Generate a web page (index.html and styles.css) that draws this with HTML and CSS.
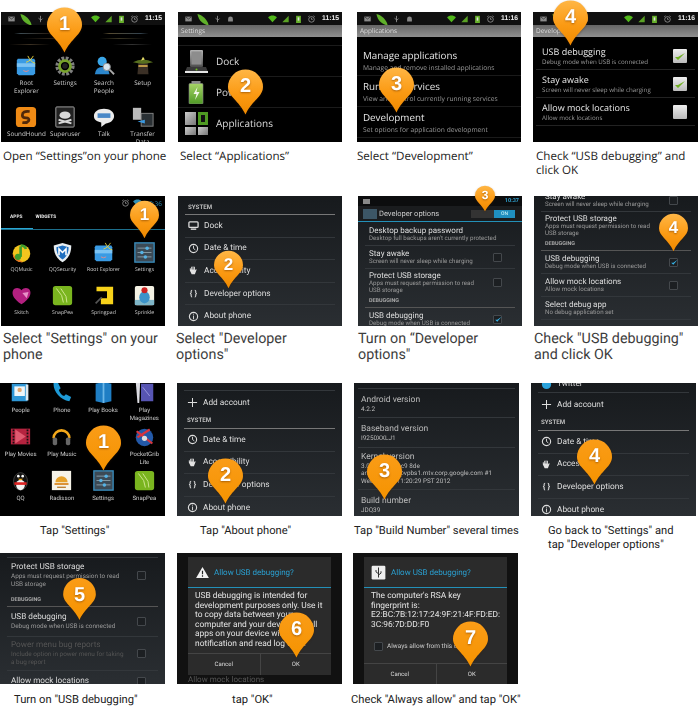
FILE: index.html
```html
<!DOCTYPE html>
<html lang="en">
<head>
<meta charset="utf-8">
<title>Enable USB debugging</title>
<link rel="stylesheet" href="styles.css">
</head>
<body>
<svg class="defs" xmlns="http://www.w3.org/2000/svg">
  <defs>
    <linearGradient id="pinA" x1="0" y1="0" x2="0" y2="1"><stop offset="0" stop-color="#ffb645"/><stop offset=".55" stop-color="#fb9a13"/><stop offset="1" stop-color="#f08a00"/></linearGradient>
    <linearGradient id="pinB" x1="0" y1="0" x2="0" y2="1"><stop offset="0" stop-color="#fa9c17"/><stop offset="1" stop-color="#f59300"/></linearGradient>
    <linearGradient id="batG" x1="0" y1="0" x2="0" y2="1"><stop offset="0" stop-color="#a7d468"/><stop offset="1" stop-color="#4f9a25"/></linearGradient>
    <linearGradient id="devG" x1="0" y1="0" x2="0" y2="1"><stop offset="0" stop-color="#b5b5b5"/><stop offset="1" stop-color="#4d4d4d"/></linearGradient>
  </defs>
  <symbol id="pin" viewBox="0 0 35 45"><path fill="url(#pinA)" d="M17.500 0A17.500 17.500 0 0 1 35 17.500C35 27 24 31 17.500 45 11 31 0 27 0 17.500A17.500 17.500 0 0 1 17.500 0Z"/></symbol>
  <symbol id="pinflat" viewBox="0 0 35 45"><path fill="url(#pinB)" d="M17.500 0A17.500 17.500 0 0 1 35 17.500C35 27 24 31 17.500 45 11 31 0 27 0 17.500A17.500 17.500 0 0 1 17.500 0Z"/></symbol>

  <symbol id="mail" viewBox="0 0 10 10"><rect x="1" y="2" width="8" height="6" fill="#8a8a8a"/><path d="M1 2l4 3 4-3" fill="none" stroke="#333"/></symbol>
  <symbol id="leaf" viewBox="0 0 14 14"><path d="M1 1c5 1 11 6 12 12C8 13 2 8 1 1Z" fill="#5fb02a"/></symbol>
  <symbol id="usb" viewBox="0 0 10 10"><path d="M5 1v8M5 6L2.500 4M5 7l2.500-2.500" stroke="#999" fill="none"/></symbol>
  <symbol id="droid" viewBox="0 0 10 10"><path d="M2 5a3 3 0 0 1 6 0v3H2Z" fill="#888"/></symbol>
  <symbol id="wifi" viewBox="0 0 11 10"><path d="M0 3c3-3 8-3 11 0L5.500 9Z" fill="#52b81c"/></symbol>
  <symbol id="wifiblue" viewBox="0 0 11 10"><path d="M0 3c3-3 8-3 11 0L5.500 9Z" fill="#2f8fb5"/></symbol>
  <symbol id="sig" viewBox="0 0 10 10"><path d="M1 9L9 1v8Z" fill="#5aa224"/></symbol>
  <symbol id="bat" viewBox="0 0 8 10"><rect x="1" y="1" width="6" height="9" fill="#67b02b"/><rect x="3" y="3" width="2" height="4" fill="#ddd"/></symbol>
  <symbol id="alarm" viewBox="0 0 10 10"><circle cx="5" cy="5.500" r="3.500" fill="none" stroke="#999"/><path d="M5 3.500v2h1.500M1 2l1.500-1M9 2L7.500 1" stroke="#999" fill="none"/></symbol>

  <symbol id="t-dock" viewBox="0 0 23 23"><rect x="5" y="0" width="13" height="17" rx="1" fill="url(#devG)"/><rect x="6.500" y="1.500" width="10" height="13" fill="#8d8d8d"/><path d="M0 22l2-5h19l2 5Z" fill="#3a3a3a"/><rect x="0" y="21" width="23" height="2" fill="#e4e4e4"/><circle cx="11.500" cy="19.500" r="1" fill="#6ec01c"/></symbol>
  <symbol id="t-power" viewBox="0 0 23 23"><rect x="6.500" y="0" width="9" height="3" fill="#8a8a8a"/><rect x="4" y="2.500" width="14" height="20.500" rx="1" fill="url(#batG)" stroke="#888" stroke-width=".6"/><path d="M12.500 6l-4 7h3l-1.500 6 4.500-8h-3Z" fill="#f2f7ea"/></symbol>

  <symbol id="clock" viewBox="0 0 12 12"><circle cx="6" cy="6" r="4.500" fill="none" stroke="#ddd" stroke-width="1.200"/><path d="M6 3v3l2 1.500" fill="none" stroke="#ddd"/></symbol>
  <symbol id="hand" viewBox="0 0 12 12"><path d="M2 6V3.500h1V5h.5V2h1v3H5V1.500h1V5h.5V2h1v4l1-1.500 1 .5-2 5H4Z" fill="#e2e2e2"/></symbol>
  <symbol id="info" viewBox="0 0 12 12"><circle cx="6" cy="6" r="4.500" fill="none" stroke="#ddd" stroke-width="1.200"/><path d="M6 5v4M6 3v1" stroke="#ddd"/></symbol>
  <symbol id="dock" viewBox="0 0 12 12"><rect x="1" y="2" width="10" height="6" rx="1" fill="none" stroke="#ddd" stroke-width="1.400"/><path d="M3 10h6" stroke="#ddd" stroke-width="1.500"/></symbol>
  <symbol id="plus" viewBox="0 0 12 12"><path d="M6 1v10M1 6h10" stroke="#ddd" stroke-width="1.100"/></symbol>
  <symbol id="check" viewBox="0 0 14 14"><path d="M2 8l3 3 7-7-7 4Z" fill="#6fb020"/></symbol>
  <symbol id="bluecheck" viewBox="0 0 14 14"><path d="M3 8l3 3 6-7-6 4Z" fill="#36b3e8"/></symbol>
  <symbol id="warn" viewBox="0 0 14 12"><path d="M7 0l7 12H0Z" fill="#f2f2f2"/><path d="M7 4v4M7 9v1.500" stroke="#222" stroke-width="1.300"/></symbol>

  <symbol id="a-root" viewBox="0 0 24 24"><path d="M3 4h18l1 2v14l-2 2H4l-2-2V6Z" fill="#3a9be4"/><rect x="2" y="9" width="20" height="4" fill="#7cc3f3"/><path d="M14 1c2 4 4 7 8 8M20 1c-2 3-4 6-8 7" stroke="#f0d63a" fill="none"/><path d="M9 17q3 2 6 0" stroke="#e88" fill="none"/></symbol>
  <symbol id="a-gear" viewBox="0 0 24 24"><circle cx="12" cy="12" r="8.500" fill="none" stroke="#7f7f7f" stroke-width="4" stroke-dasharray="3 1.500"/><circle cx="12" cy="12" r="6" fill="none" stroke="#78a32c" stroke-width="3"/><circle cx="12" cy="12" r="3" fill="#222"/></symbol>
  <symbol id="a-search" viewBox="0 0 24 24"><circle cx="10" cy="7" r="5" fill="#39a6e8"/><path d="M2 21q1-8 8-8t8 8Z" fill="#2b86cc"/><circle cx="15" cy="13" r="4" fill="#d8e6ee" stroke="#888"/><path d="M18 16l5 5" stroke="#aaa" stroke-width="2"/></symbol>
  <symbol id="a-setup" viewBox="0 0 24 24"><path d="M7 7h10l1 14H6Z" fill="#3b3026"/><path d="M1 8q11-6 22 0-11 3-22 0Z" fill="#58701f"/><path d="M12 2l2 3-4 1Z" fill="#e9e06a"/><rect x="7" y="11" width="10" height="2" fill="#caa24a"/></symbol>
  <symbol id="a-sound" viewBox="0 0 24 24"><rect x="1" y="1" width="22" height="22" rx="4" fill="#ef8a15"/><path d="M16 6q-8-1-8 4 0 3 4 3t3 3q-2 3-7 2" fill="none" stroke="#50280a" stroke-width="3"/></symbol>
  <symbol id="a-su" viewBox="0 0 24 24"><rect x="2" y="1" width="20" height="22" rx="1" fill="#222" stroke="#aaa"/><ellipse cx="12" cy="10" rx="6" ry="4" fill="#d8d8d8"/><path d="M5 15l14 4M19 15L5 19" stroke="#d8d8d8" stroke-width="2"/></symbol>
  <symbol id="a-talk" viewBox="0 0 24 24"><path d="M12 3c6 0 11 3 11 8s-5 8-9 8l-5 4v-5C4 17 1 15 1 11c0-5 5-8 11-8Z" fill="#ececec"/><rect x="5" y="8" width="14" height="5" fill="#4a88c7"/></symbol>
  <symbol id="a-trans" viewBox="0 0 24 24"><rect x="1" y="2" width="9" height="13" fill="#bbb"/><rect x="10" y="8" width="13" height="14" fill="#2a3034" stroke="#888"/><path d="M6 17l8 2v-4Z" fill="#3a9be4"/></symbol>
  <symbol id="a-qqm" viewBox="0 0 24 24"><circle cx="12" cy="13" r="10" fill="#f2c51e"/><path d="M2 13a10 10 0 0 0 12 10c-6-3-10-6-12-10Z" fill="#e47421"/><path d="M11 5v12" stroke="#3f9d2c" stroke-width="3"/><circle cx="8" cy="17" r="3.500" fill="#3f9d2c"/><path d="M11 4q5 0 6 4" stroke="#3f9d2c" stroke-width="3" fill="none"/></symbol>
  <symbol id="a-qqs" viewBox="0 0 24 24"><path d="M12 1l10 3c0 9-3 15-10 19C5 19 2 13 2 4Z" fill="#e8eef2"/><path d="M12 4l7 2c0 6-2 11-7 14C7 17 5 12 5 6Z" fill="#1f6fc0"/><path d="M8 15V8l4 4 4-4v7" fill="none" stroke="#fff" stroke-width="1.800"/></symbol>
  <symbol id="a-set" viewBox="0 0 24 24"><rect x="1" y="1" width="22" height="22" fill="#3c4a55" stroke="#3a8fbf" stroke-width="1.500"/><path d="M4 7h16M4 12h16M4 17h16" stroke="#8fa3ae"/><circle cx="15" cy="7" r="2" fill="#55b3e5"/><circle cx="9" cy="12" r="2" fill="#55b3e5"/><circle cx="13" cy="17" r="2" fill="#55b3e5"/></symbol>
  <symbol id="a-skitch" viewBox="0 0 24 24"><path d="M12 22C3 16 1 11 2 7c1-4 7-5 10-1 3-4 9-3 10 1 1 4-1 9-10 15Z" fill="#b32080"/><path d="M13 9l7-1-2 7Z" fill="#e892c7"/></symbol>
  <symbol id="a-snap" viewBox="0 0 24 24"><rect x="1" y="1" width="22" height="22" rx="3" fill="#7ab51f"/><path d="M5 4l6 8 2 8M10 4l6 9 1 7" stroke="#d8ea9c" fill="none"/></symbol>
  <symbol id="a-spring" viewBox="0 0 24 24"><path d="M4 2h19v20H9v-7h7V7H4Z" fill="#f7d21a"/><path d="M3 21l7-7" stroke="#555" stroke-width="2"/></symbol>
  <symbol id="a-sprink" viewBox="0 0 24 24"><rect x="1" y="1" width="22" height="22" rx="2" fill="#f4f2e4"/><path d="M1 17h22v6H1Z" fill="#7fb6c8"/><ellipse cx="12" cy="14" rx="6" ry="7" fill="#3c93c9"/><circle cx="12" cy="6" r="3.500" fill="#c22"/></symbol>
  <symbol id="a-people" viewBox="0 0 24 24"><rect x="2" y="2" width="18" height="20" fill="#2f97d6"/><rect x="18" y="3" width="3" height="18" fill="#dfe9ee"/><rect x="5" y="5" width="12" height="11" fill="#eef6f9"/><circle cx="11" cy="9" r="2.500" fill="#e4a66c"/></symbol>
  <symbol id="a-phone" viewBox="0 0 24 24"><path d="M3 1c-1 9 7 19 18 21l2-5-6-3-2 2c-3-1-5-4-6-7l2-2-3-6Z" fill="#1e9ad6"/></symbol>
  <symbol id="a-book" viewBox="0 0 24 24"><path d="M3 2l9-2 9 2v20l-9 2-9-2Z" fill="#1f7ec4"/><path d="M12 0v24" stroke="#6bb6e6" stroke-width="2"/></symbol>
  <symbol id="a-mag" viewBox="0 0 24 24"><rect x="8" y="2" width="14" height="20" fill="#5755b3"/><path d="M2 0h5l-1 24H4Z" fill="#dcdce2"/><path d="M10 6l8 10" stroke="#9b9be0"/></symbol>
  <symbol id="a-film" viewBox="0 0 24 24"><rect x="1" y="3" width="22" height="18" fill="#b5233f"/><path d="M4 4v16M20 4v16" stroke="#111" stroke-width="2" stroke-dasharray="2 1.500"/><path d="M6 4l12 8-12 8Z" fill="#e05a70"/></symbol>
  <symbol id="a-music" viewBox="0 0 24 24"><path d="M3 14a9 9 0 0 1 18 0" fill="none" stroke="#f3a81a" stroke-width="3"/><rect x="2" y="13" width="5" height="9" rx="2" fill="#666"/><rect x="17" y="13" width="5" height="9" rx="2" fill="#666"/></symbol>
  <symbol id="a-grib" viewBox="0 0 24 24"><circle cx="12" cy="13" r="10" fill="#2359a8"/><path d="M3 6l18 14M4 13l14-9" stroke="#d8343c" stroke-width="2.500"/><circle cx="12" cy="14" r="3" fill="#ddd"/></symbol>
  <symbol id="a-qq" viewBox="0 0 24 24"><ellipse cx="12" cy="13" rx="8" ry="10" fill="#111" stroke="#444"/><ellipse cx="12" cy="17" rx="5" ry="6" fill="#f3f3f3"/><path d="M5 14h14v3H5Z" fill="#d22"/><circle cx="9.500" cy="7" r="1.500" fill="#fff"/><circle cx="14.500" cy="7" r="1.500" fill="#fff"/><path d="M9 10h6l-3 2Z" fill="#f3b01e"/></symbol>
  <symbol id="a-rad" viewBox="0 0 24 24"><rect x="1" y="1" width="22" height="22" fill="#f6f3e8"/><path d="M5 14a7 7 0 0 1 14 0Z" fill="#e7a22b"/><rect x="4" y="15" width="16" height="2" fill="#d9861e"/><rect x="7" y="19" width="10" height="1.500" fill="#b77a2b"/></symbol>
  <symbol id="a-adb" viewBox="0 0 24 24"><rect x="1" y="1" width="22" height="22" rx="2" fill="#eee"/><path d="M12 4v16M12 14l-4-3v-3M12 16l4-3v-3" stroke="#333" stroke-width="1.600" fill="none"/></symbol>
  <symbol id="a-bird" viewBox="0 0 24 24"><circle cx="12" cy="12" r="10" fill="#2ba3dc"/></symbol>
</svg>

<main class="page">

  <section class="row row-1">
    <figure class="step">
      <div class="shot">
        <div class="screen">
          <div class="status"><svg class="si"><use href="#mail"/></svg><svg class="si leaf"><use href="#leaf"/></svg><svg class="si"><use href="#usb"/></svg><span class="grow"></span><svg class="si"><use href="#wifi"/></svg><svg class="si"><use href="#sig"/></svg><svg class="si"><use href="#bat"/></svg><svg class="si"><use href="#alarm"/></svg><b>11:15</b></div>
          <div class="streaks"></div>
          <div class="apps apps-old">
            <div class="app"><svg><use href="#a-root"/></svg><span>Root<br>Explorer</span></div>
            <div class="app"><svg><use href="#a-gear"/></svg><span>Settings</span></div>
            <div class="app"><svg><use href="#a-search"/></svg><span>Search<br>People</span></div>
            <div class="app"><svg><use href="#a-setup"/></svg><span>Setup</span></div>
            <div class="app"><svg><use href="#a-sound"/></svg><span>SoundHound</span></div>
            <div class="app"><svg><use href="#a-su"/></svg><span>Superuser</span></div>
            <div class="app"><svg><use href="#a-talk"/></svg><span>Talk</span></div>
            <div class="app"><svg><use href="#a-trans"/></svg><span>Transfer<br>Data</span></div>
          </div>
        </div>
        <div class="pin p1"><svg><use href="#pin"/></svg><span>1</span></div>
      </div>
      <figcaption class="cap cap-seg c3">Open “Settings”on your phone</figcaption>
    </figure>

    <figure class="step">
      <div class="shot">
        <div class="screen">
          <div class="status"><svg class="si"><use href="#mail"/></svg><svg class="si leaf"><use href="#leaf"/></svg><svg class="si"><use href="#usb"/></svg><svg class="si"><use href="#droid"/></svg><span class="grow"></span><svg class="si"><use href="#wifi"/></svg><svg class="si"><use href="#sig"/></svg><svg class="si"><use href="#bat"/></svg><svg class="si"><use href="#alarm"/></svg><b>11:15</b></div>
          <div class="titlebar">Settings</div>
          <div class="biglist">
            <div class="bigrow"><svg class="tile"><use href="#t-dock"/></svg>Dock</div>
            <div class="bigrow"><svg class="tile"><use href="#t-power"/></svg>Power</div>
            <div class="bigrow"><span class="tile tile-apps"><i></i><i class="on"></i><i></i><i></i></span>Applications</div>
          </div>
        </div>
        <div class="pin p2"><svg><use href="#pin"/></svg><span>2</span></div>
      </div>
      <figcaption class="cap cap-seg c3">Select “Applications”</figcaption>
    </figure>

    <figure class="step">
      <div class="shot">
        <div class="screen">
          <div class="status"><svg class="si"><use href="#mail"/></svg><svg class="si leaf"><use href="#leaf"/></svg><svg class="si"><use href="#usb"/></svg><svg class="si"><use href="#droid"/></svg><span class="grow"></span><svg class="si"><use href="#wifi"/></svg><svg class="si"><use href="#sig"/></svg><svg class="si"><use href="#bat"/></svg><svg class="si"><use href="#alarm"/></svg><b>11:16</b></div>
          <div class="titlebar">Applications</div>
          <div class="oldlist">
            <div class="oldrow"><strong>Manage applications</strong><small>Manage and remove installed applications</small></div>
            <div class="oldrow"><strong>Running services</strong><small>View and control currently running services</small></div>
            <div class="oldrow"><strong>Development</strong><small>Set options for application development</small></div>
          </div>
        </div>
        <div class="pin p3"><svg><use href="#pin"/></svg><span>3</span></div>
      </div>
      <figcaption class="cap cap-seg">Select “Development”</figcaption>
    </figure>

    <figure class="step">
      <div class="shot">
        <div class="screen">
          <div class="status"><svg class="si"><use href="#mail"/></svg><svg class="si leaf"><use href="#leaf"/></svg><svg class="si"><use href="#usb"/></svg><svg class="si"><use href="#droid"/></svg><span class="grow"></span><svg class="si"><use href="#wifi"/></svg><svg class="si"><use href="#sig"/></svg><svg class="si"><use href="#bat"/></svg><svg class="si"><use href="#alarm"/></svg><b>11:16</b></div>
          <div class="titlebar">Development</div>
          <div class="checklist">
            <div class="checkrow"><div><strong>USB debugging</strong><small>Debug mode when USB is connected</small></div><span class="box"><svg><use href="#check"/></svg></span></div>
            <div class="checkrow"><div><strong>Stay awake</strong><small>Screen will never sleep while charging</small></div><span class="box"><svg><use href="#check"/></svg></span></div>
            <div class="checkrow"><div><strong>Allow mock locations</strong><small>Allow mock locations</small></div><span class="box"></span></div>
          </div>
        </div>
        <div class="pin p4"><svg><use href="#pin"/></svg><span>4</span></div>
      </div>
      <figcaption class="cap cap-seg c4">Check “USB debugging” and click OK</figcaption>
    </figure>
  </section>

  <section class="row row-2">
    <figure class="step">
      <div class="shot">
        <div class="screen">
          <div class="tabs"><div class="tab-status"><svg class="si"><use href="#alarm"/></svg><svg class="si"><use href="#wifiblue"/></svg><span>10:36</span></div><div class="tab-row"><b>APPS</b><b>WIDGETS</b></div></div>
          <div class="apps apps-new">
            <div class="app"><svg><use href="#a-qqm"/></svg><span>QQMusic</span></div>
            <div class="app"><svg><use href="#a-qqs"/></svg><span>QQSecurity</span></div>
            <div class="app"><svg><use href="#a-root"/></svg><span>Root Explorer</span></div>
            <div class="app"><svg><use href="#a-set"/></svg><span>Settings</span></div>
            <div class="app"><svg><use href="#a-skitch"/></svg><span>Skitch</span></div>
            <div class="app"><svg><use href="#a-snap"/></svg><span>SnapPea</span></div>
            <div class="app"><svg><use href="#a-spring"/></svg><span>Springpad</span></div>
            <div class="app"><svg><use href="#a-sprink"/></svg><span>Sprinkle</span></div>
          </div>
        </div>
        <div class="pin pin-m p5"><svg><use href="#pin"/></svg><span>1</span></div>
      </div>
      <figcaption class="cap cap-rob c3">Select "Settings" on your phone</figcaption>
    </figure>

    <figure class="step">
      <div class="shot">
        <div class="screen dark">
          <div class="holo holo-sys1">
            <div class="head head-first">SYSTEM</div>
            <div class="item"><svg><use href="#dock"/></svg>Dock</div>
            <div class="item"><svg><use href="#clock"/></svg>Date &amp; time</div>
            <div class="item"><svg><use href="#hand"/></svg>Accessibility</div>
            <div class="item"><span class="br">{ }</span>Developer options</div>
            <div class="item"><svg><use href="#info"/></svg>About phone</div>
          </div>
        </div>
        <div class="pin pin-m p6"><svg><use href="#pin"/></svg><span>2</span></div>
      </div>
      <figcaption class="cap cap-rob c-1">Select "Developer options"</figcaption>
    </figure>

    <figure class="step">
      <div class="shot">
        <div class="screen dark">
          <div class="hstatus"><span class="hs-i"></span><span class="grow"></span><b>10:37</b></div>
          <div class="abar"><span class="ab-ic"></span>Developer options<span class="grow"></span><span class="switch"><i>ON</i></span></div>
          <div class="dev dev-a">
            <div class="pref h23"><div><strong>Desktop backup password</strong><small>Desktop full backups aren't currently protected</small></div></div>
            <div class="pref h23"><div><strong>Stay awake</strong><small>Screen will never sleep while charging</small></div><span class="cb"></span></div>
            <div class="pref h27 noline"><div><strong>Protect USB storage</strong><small>Apps must request permission to read<br>USB storage</small></div><span class="cb"></span></div>
            <div class="debug">DEBUGGING</div>
            <div class="pref h23"><div><strong>USB debugging</strong><small>Debug mode when USB is connected</small></div><span class="cb"><svg><use href="#bluecheck"/></svg></span></div>
          </div>
        </div>
        <div class="pin pin-s p7"><svg><use href="#pin"/></svg><span>3</span></div>
      </div>
      <figcaption class="cap cap-rob">Turn on “Developer options"</figcaption>
    </figure>

    <figure class="step">
      <div class="shot">
        <div class="screen dark">
          <div class="dev dev-b">
            <div class="pref h23"><div><strong>Stay awake</strong><small>Screen will never sleep while charging</small></div><span class="cb"></span></div>
            <div class="pref h27 noline"><div><strong>Protect USB storage</strong><small>Apps must request permission to read<br>USB storage</small></div></div>
            <div class="debug">DEBUGGING</div>
            <div class="pref h23"><div><strong>USB debugging</strong><small>Debug mode when USB is connected</small></div><span class="cb"><svg><use href="#bluecheck"/></svg></span></div>
            <div class="pref h23"><div><strong>Allow mock locations</strong><small>Allow mock locations</small></div><span class="cb"></span></div>
            <div class="pref h23"><div><strong>Select debug app</strong><small>No debug application set</small></div></div>
            <div class="pref h23 faint"><div><strong>Wait for debugger</strong></div></div>
          </div>
        </div>
        <div class="pin pin-m p8"><svg><use href="#pin"/></svg><span>4</span></div>
      </div>
      <figcaption class="cap cap-rob">Check "USB debugging" and click OK</figcaption>
    </figure>
  </section>

  <section class="row row-3">
    <figure class="step">
      <div class="shot">
        <div class="screen plain">
          <div class="apps apps-clip">
            <div class="app"><svg><use href="#a-people"/></svg><span>People</span></div>
            <div class="app"><svg><use href="#a-phone"/></svg><span>Phone</span></div>
            <div class="app"><svg><use href="#a-book"/></svg><span>Play Books</span></div>
            <div class="app"><svg><use href="#a-mag"/></svg><span>Play<br>Magazines</span></div>
            <div class="app"><svg><use href="#a-film"/></svg><span>Play Movies</span></div>
            <div class="app"><svg><use href="#a-music"/></svg><span>Play Music</span></div>
            <div class="app"></div>
            <div class="app"><svg><use href="#a-grib"/></svg><span>PocketGrib<br>Lite</span></div>
            <div class="app"><svg><use href="#a-qq"/></svg><span>QQ</span></div>
            <div class="app"><svg><use href="#a-rad"/></svg><span>Radisson</span></div>
            <div class="app"><svg><use href="#a-set"/></svg><span>Settings</span></div>
            <div class="app"><svg><use href="#a-snap"/></svg><span>SnapPea</span></div>
          </div>
        </div>
        <div class="pin p9"><svg><use href="#pinflat"/></svg><span>1</span></div>
      </div>
      <figcaption class="cap cap-sm c40">Tap "Settings"</figcaption>
    </figure>

    <figure class="step">
      <div class="shot">
        <div class="screen dark crisp">
          <div class="holo holo-sys2">
            <div class="item add"><svg><use href="#plus"/></svg>Add account</div>
            <div class="head">SYSTEM</div>
            <div class="item"><svg><use href="#clock"/></svg>Date &amp; time</div>
            <div class="item"><svg><use href="#hand"/></svg>Accessibility</div>
            <div class="item"><span class="br">{ }</span>Developer options</div>
            <div class="item"><svg><use href="#info"/></svg>About phone</div>
          </div>
        </div>
        <div class="pin p10"><svg><use href="#pinflat"/></svg><span>2</span></div>
      </div>
      <figcaption class="cap cap-sm c23">Tap "About phone"</figcaption>
    </figure>

    <figure class="step">
      <div class="shot">
        <div class="screen dark crisp">
          <div class="about">
            <div class="info h29"><strong>Android version</strong><small>4.2.2</small></div>
            <div class="info h30"><strong>Baseband version</strong><small>I9250XXLJ1</small></div>
            <div class="info h42"><strong>Kernel version</strong><small>3.0.31-g6fb96c9 8de<br>android-build@vpbs1.mtv.corp.google.com #1<br>Wed Nov 28 11:20:29 PST 2012</small></div>
            <div class="info h29"><strong>Build number</strong><small>JDQ39</small></div>
          </div>
        </div>
        <div class="pin p11"><svg><use href="#pinflat"/></svg><span>3</span></div>
      </div>
      <figcaption class="cap cap-sm">Tap "Build Number" several times</figcaption>
    </figure>

    <figure class="step">
      <div class="shot">
        <div class="screen dark crisp">
          <div class="holo holo-sys3">
            <div class="item peek"><svg><use href="#a-bird"/></svg>Twitter</div>
            <div class="item add"><svg><use href="#plus"/></svg>Add account</div>
            <div class="head">SYSTEM</div>
            <div class="item"><svg><use href="#clock"/></svg>Date &amp; time</div>
            <div class="item"><svg><use href="#hand"/></svg>Accessibility</div>
            <div class="item"><span class="br">{ }</span>Developer options</div>
            <div class="item"><svg><use href="#info"/></svg>About phone</div>
          </div>
        </div>
        <div class="pin p12"><svg><use href="#pinflat"/></svg><span>4</span></div>
      </div>
      <figcaption class="cap cap-sm c17">Go back to "Settings" and tap "Developer options"</figcaption>
    </figure>
  </section>

  <section class="row row-4">
    <figure class="step">
      <div class="shot">
        <div class="screen dark crisp">
          <div class="dev dev-c">
            <div class="pref h37 noline"><div><strong>Protect USB storage</strong><small>Apps must request permission to read<br>USB storage</small></div><span class="cb"></span></div>
            <div class="debug">DEBUGGING</div>
            <div class="pref h30"><div><strong>USB debugging</strong><small>Debug mode when USB is connected</small></div><span class="cb"></span></div>
            <div class="pref h34 faint"><div><strong>Power menu bug reports</strong><small>Include option in power menu for taking<br>a bug report</small></div><span class="cb"></span></div>
            <div class="pref h22"><div><strong>Allow mock locations</strong></div><span class="cb"></span></div>
          </div>
        </div>
        <div class="pin p13"><svg><use href="#pinflat"/></svg><span>5</span></div>
      </div>
      <figcaption class="cap cap-sm c14">Turn on "USB debugging"</figcaption>
    </figure>

    <figure class="step">
      <div class="shot">
        <div class="screen dim crisp">
          <div class="dialog">
            <div class="dlg-title"><svg class="dlg-warn"><use href="#warn"/></svg>Allow USB debugging?</div>
            <div class="dlg-body">USB debugging is intended for development purposes only. Use it to copy data between your computer and your device, install apps on your device without notification and read log data.</div>
            <div class="dlg-btns"><span>Cancel</span><span>OK</span></div>
          </div>
          <div class="behind">Allow mock locations</div>
        </div>
        <div class="pin p14"><svg><use href="#pinflat"/></svg><span>6</span></div>
      </div>
      <figcaption class="cap cap-sm c55">tap "OK"</figcaption>
    </figure>

    <figure class="step">
      <div class="shot">
        <div class="screen dim crisp">
          <div class="dialog dialog-tall">
            <div class="dlg-title"><svg class="dlg-adb"><use href="#a-adb"/></svg>Allow USB debugging?</div>
            <div class="dlg-body rsa">The computer's RSA key fingerprint is:<br>E2:BC:7B:12:17:24:9F:21:4F:FD:ED:<br>3C:96:7D:DD:F0</div>
            <div class="dlg-check"><span class="cb"></span>Always allow from this computer</div>
            <div class="dlg-btns"><span>Cancel</span><span>OK</span></div>
          </div>
        </div>
        <div class="pin p15"><svg><use href="#pinflat"/></svg><span>7</span></div>
      </div>
      <figcaption class="cap cap-sm c-2">Check "Always allow" and tap "OK"</figcaption>
    </figure>
  </section>
</main>
</body>
</html>
```
FILE: styles.css
```css
* { box-sizing: border-box; }
html, body { margin: 0; padding: 0; background: #fff; overflow: hidden; }
body { width: 698px; height: 712px; font-family: "Roboto", "Liberation Sans", sans-serif; text-rendering: geometricPrecision; }
.defs { position: absolute; width: 0; height: 0; }

.page { display: flex; flex-direction: column; padding-top: 12px; }
.row { display: grid; }
.row-1 { height: 184px; padding-left: 1px; grid-template-columns: 177px 179px 176px 165px; }
.row-2 { height: 187px; padding-left: 1px; grid-template-columns: 177px 180px 176px 164px; }
.row-3 { height: 170px; grid-template-columns: 177px 177px 177px 165px; }
.row-4 { height: 159px; grid-template-columns: 177px 176px 165px; }
.row-3 .shot { height: 133px; width: 165px; }
.row-4 .shot { height: 131px; width: 165px; }
.row-1 .step:last-child .shot { width: 165px; }

.step { margin: 0; }
.shot { position: relative; width: 164px; height: 130px; }
.screen { height: 100%; overflow: hidden; background: #000; color: #ddd; filter: blur(.35px); font-family: "Open Sans", "Liberation Sans", sans-serif; }
.screen.crisp { filter: blur(.2px); font-family: "Roboto", sans-serif; }
.screen.plain { font-family: "Roboto", sans-serif; }
.screen.dark { background: linear-gradient(#171a1d, #2a2e32); font-family: "Roboto", sans-serif; }
.grow { flex: 1; }

/* captions */
.cap { color: #222; margin: 0; }
.cap-seg { font: 11.600px/14px "Open Sans", "Liberation Sans", sans-serif; margin-top: 8px; }
.cap-rob { font: 14.300px/16px "Roboto", sans-serif; margin-top: 5px; color: #3c3c3c; max-width: 164px; }
.cap-sm { font: 11.200px/13.500px "Roboto", sans-serif; margin-top: 8px; color: #222; }
.row-4 .cap-sm { margin-top: 9px; }
.row-3 .step:last-child .cap-sm { max-width: 150px; }
.c3 { padding-left: 2px; }
.c4 { padding-left: 3px; }
.c-1 { margin-left: -2px; }
.c-2 { margin-left: -2px; white-space: nowrap; }
.c14 { padding-left: 14px; }
.c17 { padding-left: 17px; }
.c23 { padding-left: 23px; }
.c40 { padding-left: 40px; }
.c55 { padding-left: 55px; }

/* pins */
.pin { position: absolute; width: 35px; height: 46px; font: bold 20px/35px "Liberation Sans", sans-serif; color: #fff; text-align: center; filter: drop-shadow(0 1px 1px rgba(60, 30, 0, .35)); }
.pin svg { display: block; width: 100%; height: 100%; }
.pin span { position: absolute; left: 0; right: 0; top: 0; text-shadow: 0 1px 2px rgba(120, 60, 0, .6); }
.pin-m { width: 29px; height: 39px; font-size: 17px; line-height: 29px; }
.pin-s { width: 20px; height: 27px; font-size: 12px; line-height: 20px; }
.p1 { left: 46px; top: -5px; }
.p2 { left: 50px; top: 57px; }
.p3 { left: 22px; top: 55px; }
.p4 { left: 20px; top: -12px; }
.p5 { left: 129px; top: 4px; }
.p6 { left: 36px; top: 54px; }
.p7 { left: 117px; top: -11px; }
.p8 { left: 125px; top: 17px; }
.p9 { left: 86px; top: 42px; }
.p10 { left: 31px; top: 75px; }
.p11 { left: 13px; top: 71px; }
.p12 { left: 46px; top: 56px; }
.p13 { left: 62px; top: 25px; height: 42px; }
.p14 { left: 102px; top: 59px; }
.p15 { left: 100px; top: 68px; }

/* status */
.status { height: 13px; display: flex; align-items: center; gap: 4px; padding: 0 3px 0 6px; background: #101010; color: #eee; font: bold 6.800px "Liberation Sans", sans-serif; }
.status b { margin-left: 2px; }
.si { width: 9px; height: 8px; flex: none; }
.si.leaf { width: 14px; height: 13px; margin: 2px -1px 0 -1px; }
.titlebar { height: 12px; padding-left: 3px; background: linear-gradient(#666, #8f8f8f); color: #ddd; font-size: 6.500px; line-height: 12px; }

/* app grids */
.streaks { height: 30px; background: linear-gradient(90deg, transparent 8%, #3c4a52 12%, #2a2016 28%, transparent 32%, transparent 62%, #554a30 66%, #33424d 85%, transparent 90%) 0 8px / 100% 1px no-repeat, linear-gradient(90deg, transparent 12%, #2d241a 30%, transparent 38%, transparent 60%, #3b3624 72%, transparent 88%) 0 13px / 100% 1px no-repeat, linear-gradient(90deg, transparent 5%, #3b3022 18%, transparent 30%, transparent 68%, #333 80%, transparent 92%) 0 19px / 100% 1px no-repeat; }
.apps { display: grid; grid-template-columns: repeat(4, 1fr); }
.app { display: flex; flex-direction: column; align-items: center; text-align: center; color: #ccc; font-size: 6.300px; line-height: 8px; min-width: 0; }
.app span { white-space: nowrap; }
.apps-old { padding: 0 3px 0 6px; grid-auto-rows: 51px; }
.apps-old .app svg { width: 22px; height: 22px; margin-bottom: 2px; }
.apps-new { padding: 12px 0 0; grid-auto-rows: 43px; }
.apps-new .app { font-size: 5.200px; }
.apps-new .app svg { width: 21px; height: 21px; margin-bottom: 2px; }
.apps-clip { margin-top: -2px; grid-auto-rows: 44px; }
.apps-clip .app { font-size: 6px; }
.apps-clip .app svg { width: 21px; height: 23px; margin-bottom: 3px; }
.tabs { height: 34px; border-bottom: 1px solid #1d6f8c; background: linear-gradient(90deg, #2aa7d4 32px, transparent 32px) bottom / 100% 1px no-repeat; }
.tab-status { display: flex; justify-content: flex-end; align-items: center; gap: 3px; height: 14px; padding-right: 3px; font-size: 6.500px; line-height: 13px; color: #2f8fb5; }
.tab-row { display: flex; gap: 13px; padding: 4px 0 0 9px; font: bold 4.800px/8px "Roboto", sans-serif; color: #ddd; }

/* old settings */
.biglist { padding-top: 8px; }
.bigrow { height: 31px; display: flex; align-items: center; gap: 8px; padding-left: 7px; border-top: 1px solid #1b1b1b; font-size: 10px; color: #ddd; }
.tile { width: 23px; height: 23px; flex: none; display: block; }
.tile-apps { display: grid; grid-template-columns: 1fr 1fr; gap: 2px; }
.tile-apps i { background: linear-gradient(135deg, #ccc, #777); }
.tile-apps i.on { background: #111; border: 3px solid #4e9a22; }
.oldlist { padding-top: 8px; }
.oldrow { height: 31px; padding-left: 6px; display: flex; flex-direction: column; justify-content: center; border-bottom: 1px solid #1a1a1a; }
strong { font-weight: 400; display: block; white-space: nowrap; }
small { display: block; white-space: nowrap; color: #aaa; }
.oldrow strong { font-size: 9.800px; line-height: 13px; color: #e6e6e6; }
.oldrow small { font-size: 6.700px; line-height: 9px; color: #9a9a9a; margin-top: 1px; }
.checklist { padding-top: 5px; }
.checkrow { height: 28px; margin: 0 3px 0 3px; padding: 0 8px 0 6px; display: flex; align-items: center; justify-content: space-between; border-bottom: 1px solid #222; }
.checkrow strong { font-size: 9px; line-height: 12px; color: #e6e6e6; }
.checkrow small { font-size: 6.200px; line-height: 8px; color: #999; }
.box { width: 14px; height: 14px; flex: none; background: linear-gradient(#eee, #bbb); border-radius: 1px; }
.box svg { display: block; width: 14px; height: 14px; }

/* holo settings lists */
.holo { padding: 0 7px; }
.holo-sys1 { padding-top: 7px; }
.holo-sys2 { padding-top: 7px; }
.holo-sys3 { padding-top: 9px; }
.head { height: 15px; padding: 0 3px; font: bold 6.200px/13px "Roboto", sans-serif; color: #bbb; border-bottom: 1px solid #777; }
.head-first { height: 12px; line-height: 9px; }
.item { height: 22.600px; display: flex; align-items: center; gap: 5px; padding-left: 3px; border-bottom: 1px solid #33373b; font-size: 8.300px; color: #ddd; white-space: nowrap; }
.item svg, .br { width: 11px; height: 11px; flex: none; display: block; }
.br { font: bold 8px/11px "Roboto", sans-serif; text-align: center; }
.add { height: 24px; border-top: 1px solid #33373b; border-bottom: 0; }
.peek { height: 16px; margin-top: -16px; border-bottom: 0; }

/* dev options */
.hstatus { height: 10px; display: flex; align-items: center; padding: 0 3px 0 5px; background: #0c0d0e; color: #2f9fcc; font: 5.500px "Roboto", sans-serif; }
.hs-i { width: 7px; height: 5px; background: #888; }
.abar { height: 16px; display: flex; align-items: center; gap: 2px; padding: 0 7px 0 2px; background: #1a1c1e; border-bottom: 1px solid #2390b8; font-size: 7.500px; color: #ccc; }
.ab-ic { width: 14px; height: 10px; background: #3c5666; margin-left: 3px; }
.switch { width: 44px; height: 8px; background: #333; display: flex; justify-content: flex-end; }
.switch i { width: 21px; background: #1f8fc0; color: #dff; font: 5px/8px "Roboto", sans-serif; text-align: center; }
.dev { margin: 0 7px; }
.dev-a { padding-top: 1px; }
.dev-b { margin-top: -7px; }
.dev-c { margin-top: 4px; border-top: 1px solid #33373b; }
.pref { display: flex; align-items: center; justify-content: space-between; padding: 0 13px 0 4px; border-bottom: 1px solid #33373b; }
.pref strong { font-size: 8px; line-height: 9px; color: #ddd; }
.pref small { font-size: 6.200px; line-height: 7px; color: #999; }
.noline { border-bottom: 0; }
.h22 { height: 22px; }
.h23 { height: 23px; }
.h27 { height: 27px; }
.h30 { height: 30px; }
.h34 { height: 34px; }
.h37 { height: 37px; padding-bottom: 3px; }
.faint strong, .faint small { color: #555; }
.debug { height: 12px; padding-left: 4px; border-bottom: 1px solid #555; font: bold 5.400px/11px "Roboto", sans-serif; color: #aaa; }
.cb { width: 9px; height: 9px; flex: none; border: 1px solid #44484c; background: #1c1f22; border-radius: 1px; display: block; }
.cb svg { display: block; width: 10px; height: 10px; margin: -2px 0 0 -1px; }
.dev-c .pref { padding-right: 12px; }
.dev-c strong { font-size: 8.200px; }
.dev-c small { font-size: 6.400px; line-height: 8px; }

/* about */
.about { margin: 5px 4px 0 4px; border-top: 1px solid #33373b; }
.info { padding: 2px 0 0 3px; border-bottom: 1px solid #33373b; display: flex; flex-direction: column; justify-content: center; }
.info strong { font-size: 8.500px; line-height: 11px; color: #bbb; }
.info small { font-size: 6.400px; line-height: 7.500px; color: #bbb; }
.info.h29 { height: 29px; }
.info.h30 { height: 30px; }
.info.h42 { height: 42px; padding-top: 0; }

/* dialogs */
.dim { background: #111; }
.dialog { margin: 4px 11px 0; height: 118px; background: #2b2b2b; display: flex; flex-direction: column; }
.dialog-tall { height: 128px; }
.dlg-title { height: 31px; flex: none; display: flex; align-items: center; gap: 5px; padding-left: 8px; border-bottom: 1px solid #2390b8; color: #2a9fd0; font-size: 8px; white-space: nowrap; }
.dlg-warn { width: 13px; height: 11px; }
.dlg-adb { width: 15px; height: 15px; margin-left: -1px; }
.dlg-body { padding: 4px 7px 0; font-size: 8.400px; line-height: 9.600px; color: #e4e4e4; flex: 1; }
.rsa { flex: none; height: 47px; }
.dlg-check { flex: 1; display: flex; align-items: center; gap: 4px; padding: 0 10px 6px; font-size: 6.500px; white-space: nowrap; color: #ccc; }
.dlg-btns { height: 22px; flex: none; display: grid; grid-template-columns: 1fr 1fr; border-top: 1px solid #444; font-size: 6px; line-height: 21px; text-align: center; color: #ddd; }
.dlg-btns span + span { border-left: 1px solid #444; }
.behind { padding-left: 11px; font-size: 8px; line-height: 10px; color: #555; }
```
